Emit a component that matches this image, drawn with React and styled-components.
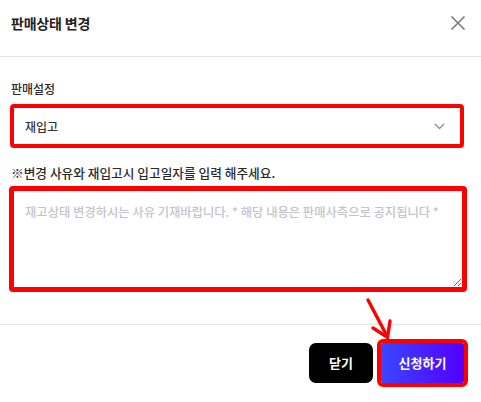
import React from 'react';
import styled, { createGlobalStyle } from 'styled-components';

const GlobalStyle = createGlobalStyle`
  html, body {
    margin: 0;
    padding: 0;
    background: #fff;
  }
  body {
    font-family: "Noto Sans CJK KR", "Noto Sans", sans-serif;
    color: #222;
  }
`

const Modal = styled.div`
  position: relative;
  width: 481px;
  height: 402px;
  display: flex;
  flex-direction: column;
  background: #fff;
`

const Header = styled.header`
  height: 57px;
  display: flex;
  align-items: center;
  justify-content: space-between;
  padding: 0 15px 11px 11px;
  box-sizing: border-box;
  border-bottom: 1px solid #e6e6e6;
`

const Title = styled.h2`
  margin: 0;
  font-size: 14px;
  font-weight: 700;
  color: #222;
  letter-spacing: -0.2px;
`

const CloseBtn = styled.button`
  border: 0;
  background: none;
  padding: 0;
  width: 16px;
  height: 16px;
  display: flex;
  cursor: pointer;
`

const Body = styled.section`
  flex: 1;
  padding: 22px 15px 0 9px;
  display: flex;
  flex-direction: column;
`

const Label = styled.div`
  font-size: ${p => p.$size || 12}px;
  font-weight: 500;
  color: #2a2a2a;
  line-height: 20px;
  padding-left: 2px;
  margin-top: ${p => p.$top || 0}px;
  margin-bottom: ${p => p.$gap || 5}px;
`

const SelectBox = styled.div`
  height: 44px;
  margin: 0 2px 0 1px;
  border: 4px solid #ff0000;
  border-radius: 4px;
  box-sizing: border-box;
  display: flex;
  align-items: center;
  justify-content: space-between;
  padding: 0 15px 0 11px;
  font-size: 12px;
  font-weight: 500;
  color: #333;
`

const Memo = styled.textarea`
  display: block;
  width: 458px;
  height: 106px;
  box-sizing: border-box;
  border: 5px solid #ff0000;
  border-radius: 4px;
  padding: 12px 11px;
  font-family: inherit;
  font-size: 12.3px;
  outline: none;
  resize: vertical;

  &::placeholder {
    color: #c3c4c9;
    font-weight: 500;
  }
`

const Footer = styled.footer`
  height: 78px;
  border-top: 1px solid #e6e6e6;
  display: flex;
  justify-content: flex-end;
  align-items: center;
  gap: 8px;
  padding: 0 17px 2px 0;
  box-sizing: border-box;
`

const Button = styled.button`
  height: 40px;
  width: ${p => p.$w}px;
  padding: 0;
  border: 0;
  color: #fff;
  font-family: inherit;
  font-size: 13px;
  font-weight: 700;
  cursor: pointer;
  background: ${p => p.$primary ? 'linear-gradient(90deg, #3a46ff, #5200ff)' : '#000'};
  outline: ${p => p.$primary ? '4px solid #ff0000' : 'none'};
  border-radius: ${p => p.$primary ? '2px' : '7px'};
`

const Arrow = styled.svg`
  position: absolute;
  left: 362px;
  top: 296px;
`

export default function App() {
  return (
    <Modal>
      <GlobalStyle />
      <Header>
        <Title>판매상태 변경</Title>
        <CloseBtn aria-label="닫기">
          <svg width="16" height="16" viewBox="0 0 16 16">
            <path d="M1.5 1.5 L14.5 14.5 M14.5 1.5 L1.5 14.5" stroke="#7a7a7a" strokeWidth="1.6" fill="none" />
          </svg>
        </CloseBtn>
      </Header>
      <Body>
        <Label>판매설정</Label>
        <SelectBox>
          <span>재입고</span>
          <svg width="11" height="7" viewBox="0 0 11 7">
            <path d="M0.8 0.8 L5.5 5.5 L10.2 0.8" stroke="#8a909c" strokeWidth="1.3" fill="none" />
          </svg>
        </SelectBox>
        <Label $size={12.7} $top={15} $gap={3}>※변경 사유와 재입고시 입고일자를 입력 해주세요.</Label>
        <Memo placeholder="재고상태 변경하시는 사유 기재바랍니다. * 해당 내용은 판매사측으로 공지됩니다 *" />
      </Body>
      <Footer>
        <Button $w={64}>닫기</Button>
        <Button $w={83} $primary>신청하기</Button>
      </Footer>
      <Arrow width="32" height="46" viewBox="0 0 32 46">
        <path d="M6 4 L25 40" stroke="#ff0000" strokeWidth="3.4" strokeLinecap="round" fill="none" />
        <path d="M11 32 L25.5 41.5 L28 25" stroke="#ff0000" strokeWidth="3.4" strokeLinecap="round" fill="none" />
      </Arrow>
    </Modal>
  );
}
